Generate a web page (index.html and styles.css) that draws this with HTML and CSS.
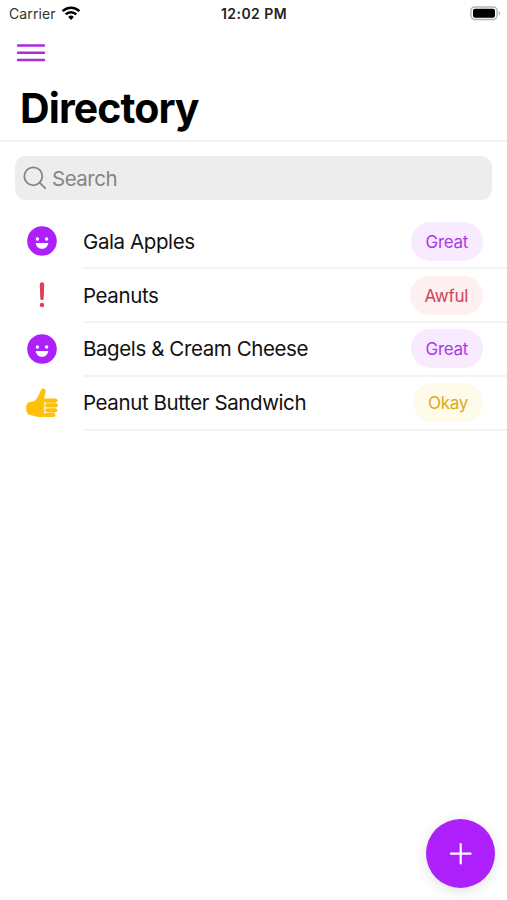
FILE: index.html
```html
<!DOCTYPE html>
<html lang="en">
<head>
<meta charset="utf-8">
<title>Directory</title>
<link rel="stylesheet" href="styles.css">
</head>
<body>
<div class="status">
  <div class="carrier"><span>Carrier</span>
    <svg width="20" height="15" viewBox="0 0 20 15" fill="none" stroke="#000" stroke-width="2.5"><path d="M1.6 5.2a12 12 0 0 1 16.8 0M4.7 8.4a7.5 7.5 0 0 1 10.6 0"/><path d="M7.2 10.9a4 4 0 0 1 5.6 0L10 13.9z" fill="#000" stroke="none"/></svg>
  </div>
  <time class="clock">12:02 PM</time>
  <svg class="battery" width="31" height="15" viewBox="0 0 31 15"><rect x=".9" y=".9" width="26.2" height="12.6" rx="4" fill="#fff" stroke="#b5b5b5" stroke-width="1.5"/><rect x="3" y="2.700" width="22" height="9" rx="2" fill="#000"/><path d="M28.7 5v4.6c2-1 2-3.6 0-4.6z" fill="#b5b5b5"/></svg>
</div>
<header>
  <button class="menu" aria-label="Menu"><svg width="30" height="20" viewBox="0 0 30 20" fill="none" stroke="#a92ce0" stroke-width="2.4" stroke-linecap="round"><path d="M2 2.5h26M2 9.8h26M2 17h26"/></svg></button>
  <h1>Directory</h1>
</header>
<main>
  <label class="search">
    <svg width="24" height="24" viewBox="0 0 24 24" fill="none" stroke="#858585" stroke-width="1.8" stroke-linecap="round"><circle cx="10.300" cy="10.300" r="9"/><path d="M16.800 16.800l5.400 5.400"/></svg>
    <span>Search</span>
  </label>
  <ul>
    <li><svg class="icon" viewBox="0 0 34 34"><circle cx="17" cy="17" r="14.8" fill="#ad20fb"/><g fill="#fff"><circle cx="12.4" cy="15" r="1.7"/><circle cx="21.6" cy="15" r="1.7"/><path d="M10.7 19h12.6c-.6 3.8-3 5.800-6.3 5.800s-5.700-2-6.300-5.800z"/></g></svg>
      <div class="row"><span class="name">Gala Apples</span><span class="tag great">Great</span></div></li>
    <li><svg class="icon" viewBox="0 0 34 34" fill="#df3e56"><path d="M14.8 6.400a2.200 2.200 0 0 1 4.400 0l-.5 14a1.700 1.700 0 0 1-3.400 0z"/><circle cx="17" cy="27" r="2.200"/></svg>
      <div class="row"><span class="name">Peanuts</span><span class="tag awful">Awful</span></div></li>
    <li><svg class="icon" viewBox="0 0 34 34"><circle cx="17" cy="17" r="14.8" fill="#ad20fb"/><g fill="#fff"><circle cx="12.4" cy="15" r="1.7"/><circle cx="21.6" cy="15" r="1.7"/><path d="M10.7 19h12.6c-.6 3.8-3 5.800-6.3 5.800s-5.700-2-6.300-5.800z"/></g></svg>
      <div class="row"><span class="name">Bagels &amp; Cream Cheese</span><span class="tag great">Great</span></div></li>
    <li><svg class="icon" viewBox="0 0 34 34" fill="#ffc108"><path d="M19.200 12.800l1.500-7.500c.5-2.800-3.400-3.900-4.700-1.400-1.600 3-2.600 6.400-4.600 9-1.400 1.800-3.500 2.900-6.400 3.100-2.500.2-3.900 2.700-3.900 6.500 0 3.900 1.500 6.200 4 6.500 3.300.4 5.800 2 9.900 2h4.400z"/><rect x="18.500" y="12.400" width="14" height="4.300" rx="2.100"/><rect x="20" y="17.300" width="13" height="4.300" rx="2.100"/><rect x="20" y="22.200" width="12.200" height="4.200" rx="2.100"/><rect x="19" y="27" width="11.500" height="3.900" rx="1.900"/></svg>
      <div class="row"><span class="name">Peanut Butter Sandwich</span><span class="tag okay">Okay</span></div></li>
  </ul>
</main>
<button class="fab" aria-label="Add"><svg width="24" height="24" viewBox="0 0 24 24" stroke="#fff" stroke-width="2.200" stroke-linecap="round"><path d="M11.700 2v19.500M2 11.700h19.500"/></svg></button>
</body>
</html>
```
FILE: styles.css
```css
* { box-sizing: border-box; }
body { margin: 0; height: 900px; overflow: hidden; background: #fff; color: #111; font-family: Inter, "Liberation Sans", sans-serif; }
button { padding: 0; border: 0; background: none; display: flex; align-items: center; justify-content: center; }
svg { display: block; flex: none; }
.status { display: grid; grid-template-columns: 1fr auto 1fr; align-items: center; height: 28px; padding: 0 6px 0 7px; font-size: 14px; }
.carrier { display: flex; align-items: center; gap: 5px; padding-left: 2px; color: #333; letter-spacing: .1px; }
.carrier svg { margin-top: -2px; }
.carrier span, .clock { margin-top: -2px; }
.clock { font-weight: 600; letter-spacing: .45px; color: #222; }
.battery { justify-self: end; margin-top: -1px; }
header { height: 114px; border-bottom: 2px solid #f3f3f3; padding: 15px 16px 0; }
h1 { margin: 20px 0 0 4px; font-size: 41px; line-height: 50px; font-weight: 700; letter-spacing: -.9px; color: #000; }
.search { display: flex; align-items: center; gap: 5px; height: 44px; margin: 14px 15px 0; padding: 0 8px; border-radius: 11px; background: #ededed; color: #858585; font-size: 20.500px; letter-spacing: -.5px; }
ul { list-style: none; margin: 15.500px 0 0; padding: 0; }
li { display: flex; align-items: center; height: 53.8px; padding-left: 25px; }
.icon { width: 34px; height: 34px; margin-right: 24px; margin-top: -2px; }
.row { flex: 1; align-self: stretch; display: flex; align-items: center; justify-content: space-between; padding-right: 24px; border-bottom: 2px solid #f3f3f3; }
.name { font-size: 20.500px; letter-spacing: -.4px; white-space: nowrap; }
.tag { height: 39px; line-height: 40px; padding: 0 15px; border-radius: 20px; font-size: 17px; letter-spacing: -.3px; }
.great { color: #ac39e6; background: #f8ebff; }
.awful { color: #cf4259; background: #feeff0; }
.okay { color: #dcaa20; background: #fffbea; }
.fab { position: absolute; left: 426px; top: 819px; width: 69px; height: 69px; border-radius: 50%; background: #ad20fb; box-shadow: 0 3px 14px rgba(0, 0, 0, .12); }
```
